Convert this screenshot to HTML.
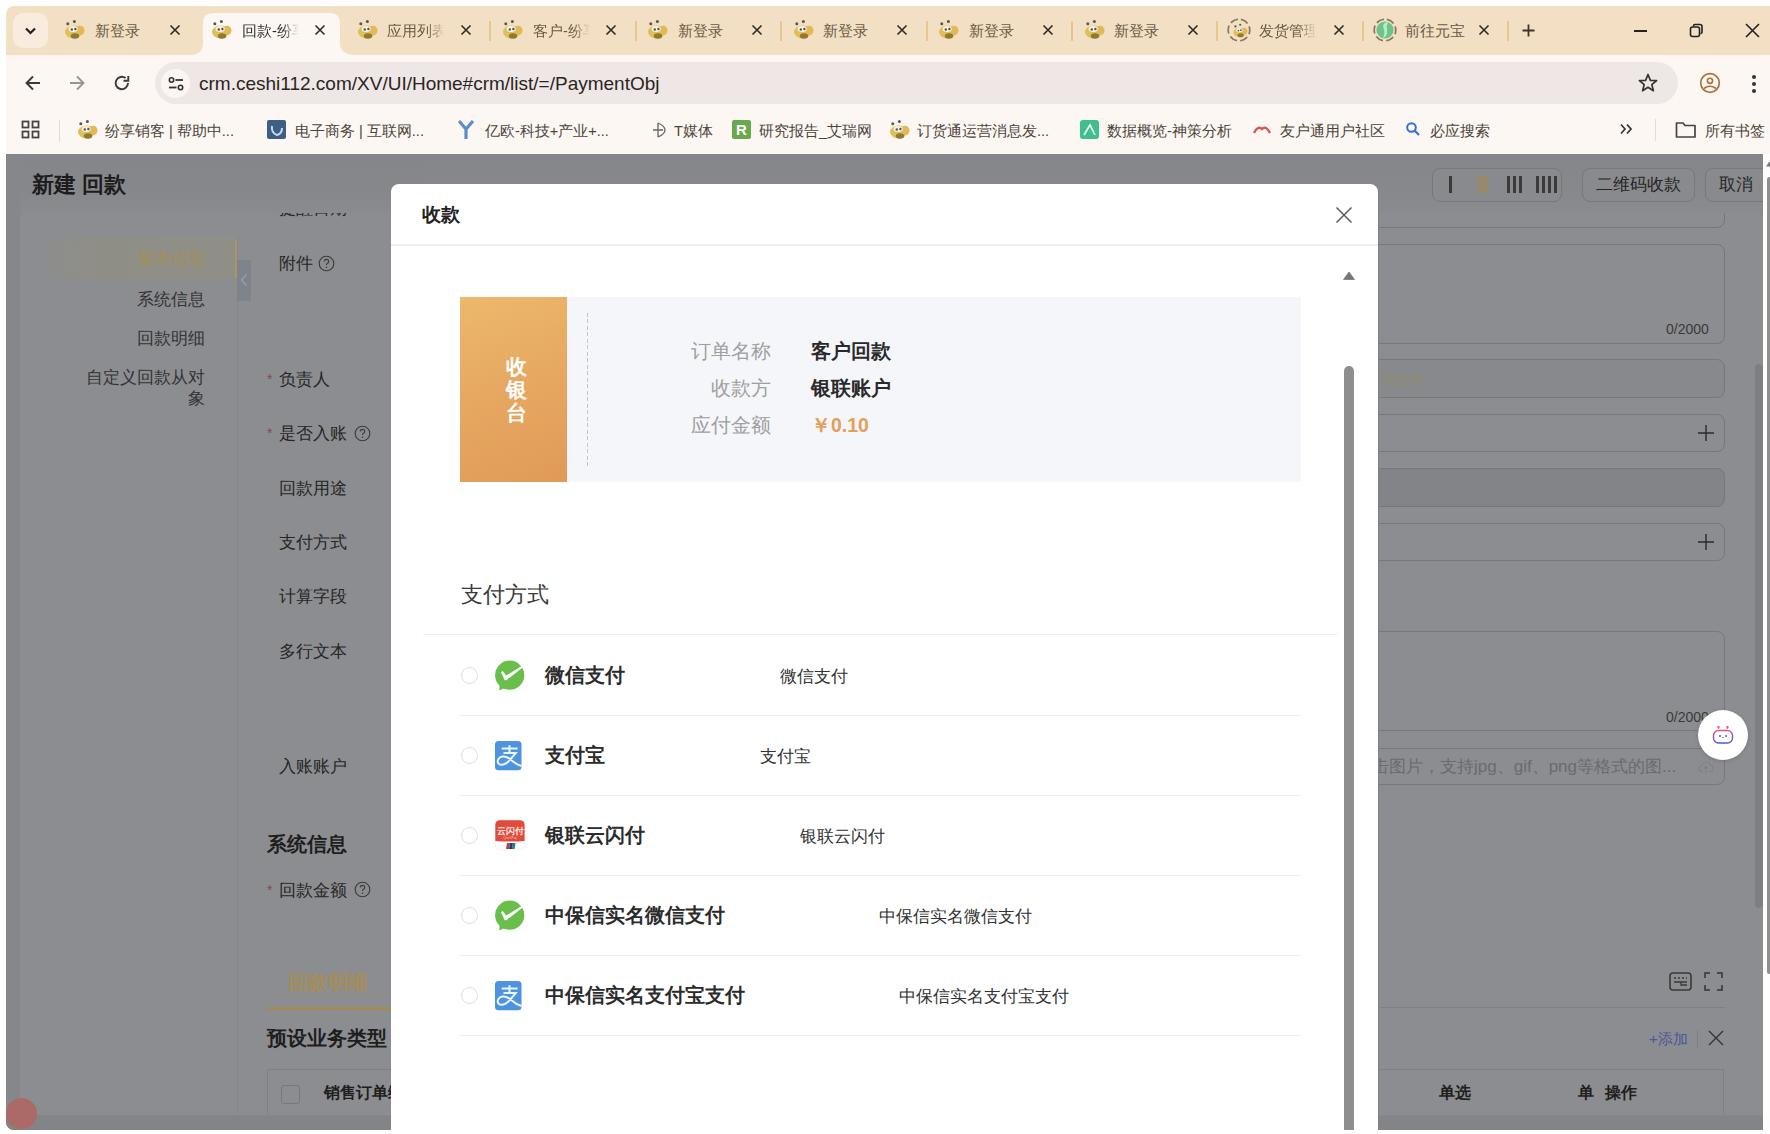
<!DOCTYPE html><html><head><meta charset="utf-8"><style>
*{margin:0;padding:0;box-sizing:border-box}
html,body{width:1770px;height:1134px;overflow:hidden;background:#fff;font-family:"Liberation Sans",sans-serif;}
.a{position:absolute;white-space:nowrap;line-height:1}
svg.a{overflow:visible}
</style></head><body>
<div class="a" style="left:6px;top:6px;width:1764px;height:1124px;border-radius:8px 0 0 8px;background:#f2dfc4;overflow:hidden">
</div>
<div class="a" style="left:6px;top:55px;width:1764px;height:100px;background:#fcf7f2"></div>
<div class="a" style="left:13px;top:13px;width:35px;height:35px;border-radius:10px;background:#f9ecdf"></div>
<svg class="a" style="left:23px;top:23px" width="15" height="15" viewBox="0 0 15 15"><path d="M3 5.5 L7.5 10 L12 5.5" fill="none" stroke="#222" stroke-width="2.2"/></svg>
<svg class="a" style="left:190px;top:13px" width="166" height="42" viewBox="0 0 166 42"><path d="M0 42 Q13 42 13 30 L13 10 Q13 0 23 0 L140 0 Q150 0 150 10 L150 30 Q150 42 166 42 Z" fill="#fcf7f2"/></svg>
<svg class="a" style="left:63.0px;top:19.0px" width="22.0" height="22.0" viewBox="0 0 22 22"><ellipse cx="10.5" cy="13" rx="8.5" ry="6.5" fill="#dfbf5a"/><ellipse cx="17" cy="11.5" rx="4.5" ry="4.8" fill="#e2b957"/><ellipse cx="12" cy="17" rx="4.2" ry="2.8" fill="#8f7a32"/><ellipse cx="10.2" cy="10" rx="4.6" ry="3" fill="#f6f2e2"/><circle cx="8.8" cy="10.5" r="1.2" fill="#555"/><circle cx="12.4" cy="10" r="1.2" fill="#555"/><circle cx="4.8" cy="4.7" r="1.5" fill="#5a5550"/><circle cx="11.4" cy="2.4" r="1.5" fill="#5a5550"/></svg>
<div class="a" style="left:95px;top:24px;font-size:14.5px;color:#6b5a45">新登录</div>
<svg class="a" style="left:169px;top:24px" width="12" height="12" viewBox="0 0 12 12"><path d="M1.5 1.5 L10.5 10.5 M10.5 1.5 L1.5 10.5" stroke="#2e2a26" stroke-width="1.6"/></svg>
<svg class="a" style="left:210.0px;top:19.0px" width="22.0" height="22.0" viewBox="0 0 22 22"><ellipse cx="10.5" cy="13" rx="8.5" ry="6.5" fill="#dfbf5a"/><ellipse cx="17" cy="11.5" rx="4.5" ry="4.8" fill="#e2b957"/><ellipse cx="12" cy="17" rx="4.2" ry="2.8" fill="#8f7a32"/><ellipse cx="10.2" cy="10" rx="4.6" ry="3" fill="#f6f2e2"/><circle cx="8.8" cy="10.5" r="1.2" fill="#555"/><circle cx="12.4" cy="10" r="1.2" fill="#555"/><circle cx="4.8" cy="4.7" r="1.5" fill="#5a5550"/><circle cx="11.4" cy="2.4" r="1.5" fill="#5a5550"/></svg>
<div class="a" style="left:242px;top:24px;font-size:14.5px;color:#2f2f2f;width:57px;overflow:hidden;-webkit-mask-image:linear-gradient(90deg,#000 72%,transparent 100%)">回款-纷享</div>
<svg class="a" style="left:314px;top:24px" width="12" height="12" viewBox="0 0 12 12"><path d="M1.5 1.5 L10.5 10.5 M10.5 1.5 L1.5 10.5" stroke="#2e2a26" stroke-width="1.6"/></svg>
<svg class="a" style="left:356.0px;top:19.0px" width="22.0" height="22.0" viewBox="0 0 22 22"><ellipse cx="10.5" cy="13" rx="8.5" ry="6.5" fill="#dfbf5a"/><ellipse cx="17" cy="11.5" rx="4.5" ry="4.8" fill="#e2b957"/><ellipse cx="12" cy="17" rx="4.2" ry="2.8" fill="#8f7a32"/><ellipse cx="10.2" cy="10" rx="4.6" ry="3" fill="#f6f2e2"/><circle cx="8.8" cy="10.5" r="1.2" fill="#555"/><circle cx="12.4" cy="10" r="1.2" fill="#555"/><circle cx="4.8" cy="4.7" r="1.5" fill="#5a5550"/><circle cx="11.4" cy="2.4" r="1.5" fill="#5a5550"/></svg>
<div class="a" style="left:387px;top:24px;font-size:14.5px;color:#6b5a45;width:57px;overflow:hidden;-webkit-mask-image:linear-gradient(90deg,#000 72%,transparent 100%)">应用列表</div>
<svg class="a" style="left:460px;top:24px" width="12" height="12" viewBox="0 0 12 12"><path d="M1.5 1.5 L10.5 10.5 M10.5 1.5 L1.5 10.5" stroke="#2e2a26" stroke-width="1.6"/></svg>
<svg class="a" style="left:501.0px;top:19.0px" width="22.0" height="22.0" viewBox="0 0 22 22"><ellipse cx="10.5" cy="13" rx="8.5" ry="6.5" fill="#dfbf5a"/><ellipse cx="17" cy="11.5" rx="4.5" ry="4.8" fill="#e2b957"/><ellipse cx="12" cy="17" rx="4.2" ry="2.8" fill="#8f7a32"/><ellipse cx="10.2" cy="10" rx="4.6" ry="3" fill="#f6f2e2"/><circle cx="8.8" cy="10.5" r="1.2" fill="#555"/><circle cx="12.4" cy="10" r="1.2" fill="#555"/><circle cx="4.8" cy="4.7" r="1.5" fill="#5a5550"/><circle cx="11.4" cy="2.4" r="1.5" fill="#5a5550"/></svg>
<div class="a" style="left:533px;top:24px;font-size:14.5px;color:#6b5a45;width:57px;overflow:hidden;-webkit-mask-image:linear-gradient(90deg,#000 72%,transparent 100%)">客户-纷享</div>
<svg class="a" style="left:605px;top:24px" width="12" height="12" viewBox="0 0 12 12"><path d="M1.5 1.5 L10.5 10.5 M10.5 1.5 L1.5 10.5" stroke="#2e2a26" stroke-width="1.6"/></svg>
<svg class="a" style="left:646.0px;top:19.0px" width="22.0" height="22.0" viewBox="0 0 22 22"><ellipse cx="10.5" cy="13" rx="8.5" ry="6.5" fill="#dfbf5a"/><ellipse cx="17" cy="11.5" rx="4.5" ry="4.8" fill="#e2b957"/><ellipse cx="12" cy="17" rx="4.2" ry="2.8" fill="#8f7a32"/><ellipse cx="10.2" cy="10" rx="4.6" ry="3" fill="#f6f2e2"/><circle cx="8.8" cy="10.5" r="1.2" fill="#555"/><circle cx="12.4" cy="10" r="1.2" fill="#555"/><circle cx="4.8" cy="4.7" r="1.5" fill="#5a5550"/><circle cx="11.4" cy="2.4" r="1.5" fill="#5a5550"/></svg>
<div class="a" style="left:678px;top:24px;font-size:14.5px;color:#6b5a45">新登录</div>
<svg class="a" style="left:751px;top:24px" width="12" height="12" viewBox="0 0 12 12"><path d="M1.5 1.5 L10.5 10.5 M10.5 1.5 L1.5 10.5" stroke="#2e2a26" stroke-width="1.6"/></svg>
<svg class="a" style="left:792.0px;top:19.0px" width="22.0" height="22.0" viewBox="0 0 22 22"><ellipse cx="10.5" cy="13" rx="8.5" ry="6.5" fill="#dfbf5a"/><ellipse cx="17" cy="11.5" rx="4.5" ry="4.8" fill="#e2b957"/><ellipse cx="12" cy="17" rx="4.2" ry="2.8" fill="#8f7a32"/><ellipse cx="10.2" cy="10" rx="4.6" ry="3" fill="#f6f2e2"/><circle cx="8.8" cy="10.5" r="1.2" fill="#555"/><circle cx="12.4" cy="10" r="1.2" fill="#555"/><circle cx="4.8" cy="4.7" r="1.5" fill="#5a5550"/><circle cx="11.4" cy="2.4" r="1.5" fill="#5a5550"/></svg>
<div class="a" style="left:823px;top:24px;font-size:14.5px;color:#6b5a45">新登录</div>
<svg class="a" style="left:896px;top:24px" width="12" height="12" viewBox="0 0 12 12"><path d="M1.5 1.5 L10.5 10.5 M10.5 1.5 L1.5 10.5" stroke="#2e2a26" stroke-width="1.6"/></svg>
<svg class="a" style="left:937.0px;top:19.0px" width="22.0" height="22.0" viewBox="0 0 22 22"><ellipse cx="10.5" cy="13" rx="8.5" ry="6.5" fill="#dfbf5a"/><ellipse cx="17" cy="11.5" rx="4.5" ry="4.8" fill="#e2b957"/><ellipse cx="12" cy="17" rx="4.2" ry="2.8" fill="#8f7a32"/><ellipse cx="10.2" cy="10" rx="4.6" ry="3" fill="#f6f2e2"/><circle cx="8.8" cy="10.5" r="1.2" fill="#555"/><circle cx="12.4" cy="10" r="1.2" fill="#555"/><circle cx="4.8" cy="4.7" r="1.5" fill="#5a5550"/><circle cx="11.4" cy="2.4" r="1.5" fill="#5a5550"/></svg>
<div class="a" style="left:969px;top:24px;font-size:14.5px;color:#6b5a45">新登录</div>
<svg class="a" style="left:1042px;top:24px" width="12" height="12" viewBox="0 0 12 12"><path d="M1.5 1.5 L10.5 10.5 M10.5 1.5 L1.5 10.5" stroke="#2e2a26" stroke-width="1.6"/></svg>
<svg class="a" style="left:1083.0px;top:19.0px" width="22.0" height="22.0" viewBox="0 0 22 22"><ellipse cx="10.5" cy="13" rx="8.5" ry="6.5" fill="#dfbf5a"/><ellipse cx="17" cy="11.5" rx="4.5" ry="4.8" fill="#e2b957"/><ellipse cx="12" cy="17" rx="4.2" ry="2.8" fill="#8f7a32"/><ellipse cx="10.2" cy="10" rx="4.6" ry="3" fill="#f6f2e2"/><circle cx="8.8" cy="10.5" r="1.2" fill="#555"/><circle cx="12.4" cy="10" r="1.2" fill="#555"/><circle cx="4.8" cy="4.7" r="1.5" fill="#5a5550"/><circle cx="11.4" cy="2.4" r="1.5" fill="#5a5550"/></svg>
<div class="a" style="left:1114px;top:24px;font-size:14.5px;color:#6b5a45">新登录</div>
<svg class="a" style="left:1187px;top:24px" width="12" height="12" viewBox="0 0 12 12"><path d="M1.5 1.5 L10.5 10.5 M10.5 1.5 L1.5 10.5" stroke="#2e2a26" stroke-width="1.6"/></svg>
<svg class="a" style="left:1231.58px;top:22.58px" width="15.84" height="15.84" viewBox="0 0 22 22"><ellipse cx="10.5" cy="13" rx="8.5" ry="6.5" fill="#dfbf5a"/><ellipse cx="17" cy="11.5" rx="4.5" ry="4.8" fill="#e2b957"/><ellipse cx="12" cy="17" rx="4.2" ry="2.8" fill="#8f7a32"/><ellipse cx="10.2" cy="10" rx="4.6" ry="3" fill="#f6f2e2"/><circle cx="8.8" cy="10.5" r="1.2" fill="#555"/><circle cx="12.4" cy="10" r="1.2" fill="#555"/><circle cx="4.8" cy="4.7" r="1.5" fill="#5a5550"/><circle cx="11.4" cy="2.4" r="1.5" fill="#5a5550"/></svg>
<svg class="a" style="left:1227px;top:18px" width="24" height="24" viewBox="0 0 24 24"><circle cx="12" cy="12" r="10.8" fill="none" stroke="#8a7560" stroke-width="1.7" stroke-dasharray="8 3.3" transform="rotate(-80 12 12)"/></svg>
<div class="a" style="left:1259px;top:24px;font-size:14.5px;color:#6b5a45;width:57px;overflow:hidden;-webkit-mask-image:linear-gradient(90deg,#000 72%,transparent 100%)">发货管理</div>
<svg class="a" style="left:1333px;top:24px" width="12" height="12" viewBox="0 0 12 12"><path d="M1.5 1.5 L10.5 10.5 M10.5 1.5 L1.5 10.5" stroke="#2e2a26" stroke-width="1.6"/></svg>
<svg class="a" style="left:1373px;top:18px" width="24" height="24" viewBox="0 0 24 24"><circle cx="12" cy="12" r="10.8" fill="none" stroke="#8a7560" stroke-width="1.7" stroke-dasharray="8 3.3" transform="rotate(-80 12 12)"/><circle cx="12" cy="12" r="8.6" fill="#6cc48a"/><path d="M13.5 4 Q9 6 10.5 10 Q12.5 14 10 20 Q15 18 14 12 Q13 8 15 4.5 Z" fill="#b8ecc8"/></svg>
<div class="a" style="left:1405px;top:24px;font-size:14.5px;color:#6b5a45">前往元宝</div>
<svg class="a" style="left:1478px;top:24px" width="12" height="12" viewBox="0 0 12 12"><path d="M1.5 1.5 L10.5 10.5 M10.5 1.5 L1.5 10.5" stroke="#2e2a26" stroke-width="1.6"/></svg>
<div class="a" style="left:489px;top:21px;width:2px;height:20px;background:#e9c58f"></div>
<div class="a" style="left:635px;top:21px;width:2px;height:20px;background:#e9c58f"></div>
<div class="a" style="left:780px;top:21px;width:2px;height:20px;background:#e9c58f"></div>
<div class="a" style="left:926px;top:21px;width:2px;height:20px;background:#e9c58f"></div>
<div class="a" style="left:1071px;top:21px;width:2px;height:20px;background:#e9c58f"></div>
<div class="a" style="left:1216px;top:21px;width:2px;height:20px;background:#e9c58f"></div>
<div class="a" style="left:1362px;top:21px;width:2px;height:20px;background:#e9c58f"></div>
<div class="a" style="left:1507px;top:21px;width:2px;height:20px;background:#e9c58f"></div>
<svg class="a" style="left:1521px;top:23px" width="15" height="15" viewBox="0 0 15 15"><path d="M7.5 1.5 V13.5 M1.5 7.5 H13.5" stroke="#3e362c" stroke-width="1.8"/></svg>
<div class="a" style="left:1634px;top:30px;width:13px;height:1.5px;background:#222"></div>
<svg class="a" style="left:1689px;top:23px" width="15" height="15" viewBox="0 0 15 15"><rect x="1.5" y="4" width="9" height="9.5" rx="2" fill="none" stroke="#222" stroke-width="1.6"/><path d="M4.5 3.5 V3 Q4.5 1.5 6 1.5 H11 Q13 1.5 13 3.5 V9 Q13 10.5 11.5 10.5" fill="none" stroke="#222" stroke-width="1.6"/></svg>
<svg class="a" style="left:1745px;top:23px" width="15" height="15" viewBox="0 0 15 15"><path d="M1 1 L14 14 M14 1 L1 14" stroke="#222" stroke-width="1.6"/></svg>
<svg class="a" style="left:23px;top:73px" width="20" height="20" viewBox="0 0 20 20"><path d="M17 10 H3.5 M10 3.5 L3.5 10 L10 16.5" fill="none" stroke="#3a3a3a" stroke-width="1.9"/></svg>
<svg class="a" style="left:67px;top:73px" width="20" height="20" viewBox="0 0 20 20"><path d="M3 10 H16.5 M10 3.5 L16.5 10 L10 16.5" fill="none" stroke="#9a948e" stroke-width="1.9"/></svg>
<svg class="a" style="left:112px;top:73px" width="20" height="20" viewBox="0 0 20 20"><path d="M16 10 A6.2 6.2 0 1 1 13.6 5.1" fill="none" stroke="#3a3a3a" stroke-width="1.9"/><path d="M16.3 3 V7.8 H11.5" fill="none" stroke="#3a3a3a" stroke-width="1.9"/></svg>
<div class="a" style="left:155px;top:62px;width:1523px;height:42px;border-radius:21px;background:#eee7e5"></div>
<div class="a" style="left:161px;top:69px;width:29px;height:29px;border-radius:15px;background:#fbf6f2"></div>
<svg class="a" style="left:166px;top:74px" width="20" height="20" viewBox="0 0 20 20"><circle cx="5.5" cy="6" r="2.2" fill="none" stroke="#333" stroke-width="1.6"/><path d="M9.5 6 H17" stroke="#333" stroke-width="1.8"/><circle cx="14.5" cy="13.5" r="2.2" fill="none" stroke="#333" stroke-width="1.6"/><path d="M3 13.5 H10.5" stroke="#333" stroke-width="1.8"/></svg>
<div class="a" style="left:199px;top:74px;font-size:19px;color:#2a2522;font-weight:normal;">crm.ceshi112.com/XV/UI/Home#crm/list/=/PaymentObj</div>
<svg class="a" style="left:1637px;top:72px" width="22" height="22" viewBox="0 0 22 22"><path d="M11 2.5 L13.4 8.3 L19.6 8.6 L14.8 12.6 L16.4 18.7 L11 15.3 L5.6 18.7 L7.2 12.6 L2.4 8.6 L8.6 8.3 Z" fill="none" stroke="#333" stroke-width="1.7" stroke-linejoin="round"/></svg>
<svg class="a" style="left:1699px;top:72px" width="22" height="22" viewBox="0 0 22 22"><circle cx="11" cy="11" r="9.3" fill="none" stroke="#a7743a" stroke-width="1.7"/><circle cx="11" cy="8.8" r="2.6" fill="none" stroke="#a7743a" stroke-width="1.6"/><path d="M5 16.5 Q11 12 17 16.5" fill="none" stroke="#a7743a" stroke-width="1.6"/></svg>
<div class="a" style="left:1752px;top:74.5px;width:4px;height:4px;border-radius:2px;background:#333"></div>
<div class="a" style="left:1752px;top:81.5px;width:4px;height:4px;border-radius:2px;background:#333"></div>
<div class="a" style="left:1752px;top:88.5px;width:4px;height:4px;border-radius:2px;background:#333"></div>
<svg class="a" style="left:21px;top:120px" width="19" height="19" viewBox="0 0 19 19"><rect x="1.5" y="1.5" width="6" height="6" fill="none" stroke="#444" stroke-width="1.8"/><rect x="11.5" y="1.5" width="6" height="6" fill="none" stroke="#444" stroke-width="1.8"/><rect x="1.5" y="11.5" width="6" height="6" fill="none" stroke="#444" stroke-width="1.8"/><rect x="11.5" y="11.5" width="6" height="6" fill="none" stroke="#444" stroke-width="1.8"/></svg>
<div class="a" style="left:59px;top:120px;width:1px;height:22px;background:#eadbc8"></div>
<svg class="a" style="left:76.0px;top:119.0px" width="22.0" height="22.0" viewBox="0 0 22 22"><ellipse cx="10.5" cy="13" rx="8.5" ry="6.5" fill="#dfbf5a"/><ellipse cx="17" cy="11.5" rx="4.5" ry="4.8" fill="#e2b957"/><ellipse cx="12" cy="17" rx="4.2" ry="2.8" fill="#8f7a32"/><ellipse cx="10.2" cy="10" rx="4.6" ry="3" fill="#f6f2e2"/><circle cx="8.8" cy="10.5" r="1.2" fill="#555"/><circle cx="12.4" cy="10" r="1.2" fill="#555"/><circle cx="4.8" cy="4.7" r="1.5" fill="#5a5550"/><circle cx="11.4" cy="2.4" r="1.5" fill="#5a5550"/></svg>
<div class="a" style="left:105px;top:123.5px;font-size:14.5px;color:#4d443c;font-weight:normal;">纷享销客 | 帮助中...</div>
<div class="a" style="left:267px;top:120px;width:19px;height:19px;background:#3d5f85;border-radius:2px"></div><svg class="a" style="left:267px;top:120px" width="19" height="19"><path d="M5 6 Q4 13 10 15 Q15 14 15 8" fill="none" stroke="#c8d8e8" stroke-width="2"/></svg>
<div class="a" style="left:295px;top:123.5px;font-size:14.5px;color:#4d443c;font-weight:normal;">电子商务 | 互联网...</div>
<svg class="a" style="left:456px;top:119px" width="20" height="22" viewBox="0 0 20 22"><path d="M3 2 L10 10 L17 2 M10 10 V20" fill="none" stroke="#5b8dc9" stroke-width="3.2"/></svg>
<div class="a" style="left:485px;top:123.5px;font-size:14.5px;color:#4d443c;font-weight:normal;">亿欧-科技+产业+...</div>
<svg class="a" style="left:650px;top:121px" width="16" height="18" viewBox="0 0 16 18"><path d="M3 9 H13 M8 2 V16 M8 2 Q15 5 15 9 Q15 13 8 16" fill="none" stroke="#666" stroke-width="1.3"/></svg>
<div class="a" style="left:674px;top:123.5px;font-size:14.5px;color:#4d443c;font-weight:normal;">T媒体</div>
<div class="a" style="left:732px;top:120px;width:19px;height:19px;background:#6aa84f;border-radius:2px"></div><div class="a" style="left:736px;top:122px;font-size:15px;font-weight:bold;color:#fff">R</div>
<div class="a" style="left:759px;top:123.5px;font-size:14.5px;color:#4d443c;font-weight:normal;">研究报告_艾瑞网</div>
<svg class="a" style="left:888.0px;top:119.0px" width="22.0" height="22.0" viewBox="0 0 22 22"><ellipse cx="10.5" cy="13" rx="8.5" ry="6.5" fill="#dfbf5a"/><ellipse cx="17" cy="11.5" rx="4.5" ry="4.8" fill="#e2b957"/><ellipse cx="12" cy="17" rx="4.2" ry="2.8" fill="#8f7a32"/><ellipse cx="10.2" cy="10" rx="4.6" ry="3" fill="#f6f2e2"/><circle cx="8.8" cy="10.5" r="1.2" fill="#555"/><circle cx="12.4" cy="10" r="1.2" fill="#555"/><circle cx="4.8" cy="4.7" r="1.5" fill="#5a5550"/><circle cx="11.4" cy="2.4" r="1.5" fill="#5a5550"/></svg>
<div class="a" style="left:917px;top:123.5px;font-size:14.5px;color:#4d443c;font-weight:normal;">订货通运营消息发...</div>
<div class="a" style="left:1080px;top:120px;width:19px;height:19px;background:#3fbf8a;border-radius:3px"></div><svg class="a" style="left:1080px;top:120px" width="19" height="19"><path d="M4 15 L10 5 L15 15" fill="none" stroke="#fff" stroke-width="1.6"/></svg>
<div class="a" style="left:1107px;top:123.5px;font-size:14.5px;color:#4d443c;font-weight:normal;">数据概览-神策分析</div>
<svg class="a" style="left:1252px;top:123px" width="20" height="12" viewBox="0 0 20 12"><path d="M2 10 Q6 2 10 6 Q14 2 18 10" fill="none" stroke="#d9534f" stroke-width="2.4"/></svg>
<div class="a" style="left:1280px;top:123.5px;font-size:14.5px;color:#4d443c;font-weight:normal;">友户通用户社区</div>
<svg class="a" style="left:1405px;top:121px" width="16" height="16" viewBox="0 0 16 16"><circle cx="6.5" cy="6.5" r="4.3" fill="none" stroke="#2f6fd6" stroke-width="2"/><path d="M9.8 9.8 L14 14" stroke="#2f6fd6" stroke-width="2.2"/></svg>
<div class="a" style="left:1430px;top:123.5px;font-size:14.5px;color:#4d443c;font-weight:normal;">必应搜索</div>
<svg class="a" style="left:1619px;top:123px" width="14" height="12" viewBox="0 0 14 12"><path d="M2 1.5 L6 6 L2 10.5 M8 1.5 L12 6 L8 10.5" fill="none" stroke="#333" stroke-width="1.7"/></svg>
<div class="a" style="left:1655px;top:119px;width:1px;height:22px;background:#eadbc8"></div>
<svg class="a" style="left:1675px;top:121px" width="22" height="18" viewBox="0 0 22 18"><path d="M1.5 2 H8 L10 4.5 H20 V16 H1.5 Z" fill="none" stroke="#444" stroke-width="1.7" stroke-linejoin="round"/></svg>
<div class="a" style="left:1705px;top:123.5px;font-size:14.5px;color:#4d443c;font-weight:normal;">所有书签</div>
<div class="a" style="left:6px;top:154px;width:1757px;height:976px;background:#f5f6f9;overflow:hidden;border-radius:0 0 0 8px">
<div class="a" style="left:0px;top:0px;width:1757px;height:976px;background:#86878b"></div>
<div class="a" style="left:14px;top:58px;width:1743px;height:903px;background:#8c8d91;border-radius:8px 8px 0 0"></div>
<div class="a" style="left:231px;top:84px;width:1px;height:877px;background:#85868a"></div>
<div class="a" style="left:40px;top:84px;width:191px;height:41px;background:linear-gradient(90deg,rgba(143,142,134,0.3) 0%,#8f8e86 25%,#908f87 100%);border-radius:10px 0 0 10px;filter:blur(1.5px)"></div>
<div class="a" style="left:229px;top:86px;width:2px;height:38px;background:#a99464"></div>
<div class="a" style="left:199px;top:96px;font-size:17px;color:#a38f55;font-weight:normal;transform:translateX(-100%)">基本信息</div>
<div class="a" style="left:199px;top:137px;font-size:17px;color:#333;font-weight:normal;transform:translateX(-100%)">系统信息</div>
<div class="a" style="left:199px;top:176px;font-size:17px;color:#333;font-weight:normal;transform:translateX(-100%)">回款明细</div>
<div class="a" style="left:199px;top:215px;font-size:17px;color:#333;font-weight:normal;transform:translateX(-100%)">自定义回款从对</div>
<div class="a" style="left:199px;top:236px;font-size:17px;color:#333;font-weight:normal;transform:translateX(-100%)">象</div>
<div class="a" style="left:231px;top:106px;width:14px;height:41px;background:#7f848c"></div>
<svg class="a" style="left:234px;top:119px" width="8" height="14" viewBox="0 0 8 14"><path d="M6.5 1.5 L1.5 7 L6.5 12.5" fill="none" stroke="#9aa0a8" stroke-width="1.3"/></svg>
<div class="a" style="left:273px;top:46px;font-size:17px;color:#262626;font-weight:normal;">提醒日期</div>
<div class="a" style="left:273px;top:101px;font-size:17px;color:#262626;font-weight:normal;">附件</div>
<svg class="a" style="left:312px;top:101px" width="17" height="17" viewBox="0 0 17 17"><circle cx="8.5" cy="8.5" r="7.3" fill="none" stroke="#3c3c3c" stroke-width="1.1"/><path d="M6.3 6.6 Q6.3 4.4 8.5 4.4 Q10.7 4.4 10.7 6.4 Q10.7 7.6 9.4 8.3 Q8.5 8.8 8.5 10" fill="none" stroke="#3c3c3c" stroke-width="1.2"/><circle cx="8.5" cy="12.3" r="0.8" fill="#3c3c3c"/></svg>
<div class="a" style="left:261px;top:218px;font-size:14px;color:#8a4650;font-weight:normal;">*</div>
<div class="a" style="left:273px;top:217px;font-size:17px;color:#262626;font-weight:normal;">负责人</div>
<div class="a" style="left:261px;top:272px;font-size:14px;color:#8a4650;font-weight:normal;">*</div>
<div class="a" style="left:273px;top:271px;font-size:17px;color:#262626;font-weight:normal;">是否入账</div>
<svg class="a" style="left:348px;top:271px" width="17" height="17" viewBox="0 0 17 17"><circle cx="8.5" cy="8.5" r="7.3" fill="none" stroke="#3c3c3c" stroke-width="1.1"/><path d="M6.3 6.6 Q6.3 4.4 8.5 4.4 Q10.7 4.4 10.7 6.4 Q10.7 7.6 9.4 8.3 Q8.5 8.8 8.5 10" fill="none" stroke="#3c3c3c" stroke-width="1.2"/><circle cx="8.5" cy="12.3" r="0.8" fill="#3c3c3c"/></svg>
<div class="a" style="left:273px;top:326px;font-size:17px;color:#262626;font-weight:normal;">回款用途</div>
<div class="a" style="left:273px;top:380px;font-size:17px;color:#262626;font-weight:normal;">支付方式</div>
<div class="a" style="left:273px;top:434px;font-size:17px;color:#262626;font-weight:normal;">计算字段</div>
<div class="a" style="left:273px;top:489px;font-size:17px;color:#262626;font-weight:normal;">多行文本</div>
<div class="a" style="left:273px;top:604px;font-size:17px;color:#262626;font-weight:normal;">入账账户</div>
<div class="a" style="left:261px;top:681px;font-size:19.5px;color:#1e1e1e;font-weight:bold;">系统信息</div>
<div class="a" style="left:261px;top:729px;font-size:14px;color:#8a4650;font-weight:normal;">*</div>
<div class="a" style="left:273px;top:728px;font-size:17px;color:#262626;font-weight:normal;">回款金额</div>
<svg class="a" style="left:348px;top:727px" width="17" height="17" viewBox="0 0 17 17"><circle cx="8.5" cy="8.5" r="7.3" fill="none" stroke="#3c3c3c" stroke-width="1.1"/><path d="M6.3 6.6 Q6.3 4.4 8.5 4.4 Q10.7 4.4 10.7 6.4 Q10.7 7.6 9.4 8.3 Q8.5 8.8 8.5 10" fill="none" stroke="#3c3c3c" stroke-width="1.2"/><circle cx="8.5" cy="12.3" r="0.8" fill="#3c3c3c"/></svg>
<div class="a" style="left:282px;top:819px;font-size:19.5px;color:#a58e55;font-weight:bold;">回款明细</div>
<div class="a" style="left:261px;top:853px;width:130px;height:3px;background:#a18a55"></div>
<div class="a" style="left:261px;top:875px;font-size:19.5px;color:#1e1e1e;font-weight:bold;">预设业务类型</div>
<div class="a" style="left:261px;top:915px;width:1457px;height:46px;border:1px solid #7f8084;border-bottom:none;background:#8c8d91"></div>
<div class="a" style="left:275px;top:931px;width:19px;height:19px;border:1px solid #77787c;border-radius:3px"></div>
<div class="a" style="left:318px;top:931px;font-size:16px;color:#1e1e1e;font-weight:bold;">销售订单编号</div>
<div class="a" style="left:1433px;top:931px;font-size:16px;color:#1e1e1e;font-weight:bold;">单选</div>
<div class="a" style="left:1572px;top:931px;font-size:16px;color:#1e1e1e;font-weight:bold;">单</div>
<div class="a" style="left:1599px;top:931px;font-size:16px;color:#1e1e1e;font-weight:bold;">操作</div>
<div class="a" style="left:0px;top:962px;width:1757px;height:14px;background:#828487"></div>
<div class="a" style="left:1354px;top:36px;width:365px;height:38px;border:1px solid #77787c;border-radius:8px"></div>
<div class="a" style="left:1354px;top:90px;width:365px;height:100px;border:1px solid #77787c;border-radius:8px;background:#8c8d91"></div>
<div class="a" style="left:1660px;top:168px;font-size:14px;color:#3a3a3a;font-weight:normal;">0/2000</div>
<div class="a" style="left:1354px;top:205px;width:365px;height:39px;border:1px solid #77787c;border-radius:8px;background:#88898d"></div>
<div class="a" style="left:1376px;top:218px;font-size:14px;color:#8f8b70;font-weight:normal;">请选择</div>
<div class="a" style="left:1354px;top:260px;width:365px;height:38px;border:1px solid #77787c;border-radius:8px;background:#8c8d91"></div>
<svg class="a" style="left:1691px;top:270.0px" width="18" height="18" viewBox="0 0 18 18"><path d="M9 1 V17 M1 9 H17" stroke="#2a2a2a" stroke-width="1.4"/></svg>
<div class="a" style="left:1354px;top:314px;width:365px;height:39px;border:1px solid #77787c;border-radius:8px;background:#838488"></div>
<div class="a" style="left:1354px;top:369px;width:365px;height:38px;border:1px solid #77787c;border-radius:8px;background:#8c8d91"></div>
<svg class="a" style="left:1691px;top:379.0px" width="18" height="18" viewBox="0 0 18 18"><path d="M9 1 V17 M1 9 H17" stroke="#2a2a2a" stroke-width="1.4"/></svg>
<div class="a" style="left:1354px;top:477px;width:365px;height:100px;border:1px solid #77787c;border-radius:8px;background:#8c8d91"></div>
<div class="a" style="left:1660px;top:556px;font-size:14px;color:#3a3a3a;font-weight:normal;">0/2000</div>
<div class="a" style="left:1354px;top:594px;width:365px;height:37px;border:1px solid #77787c;border-radius:8px;background:#8c8d91"></div>
<div class="a" style="left:1366px;top:604px;font-size:17px;color:#6a6b6e;font-weight:normal;">击图片，支持jpg、gif、png等格式的图...</div>
<svg class="a" style="left:1692px;top:606px" width="16" height="15" viewBox="0 0 16 15"><path d="M5 11.5 H4 Q1 11.5 1 8.5 Q1 6 3.5 5.8 Q4.2 2 8 2 Q11.8 2 12.5 5.8 Q15 6 15 8.5 Q15 11.5 12 11.5 H11 M8 6.5 V14 M6 8.5 L8 6.5 L10 8.5" fill="none" stroke="#7f8084" stroke-width="1.1"/></svg>
<div class="a" style="left:14px;top:0px;width:400px;height:59px;background:linear-gradient(180deg,#85868a 0%,#86878b 55%,#8a8b8f 100%)"></div>
<div class="a" style="left:414px;top:0px;width:1343px;height:59px;background:linear-gradient(180deg,#85868a 0%,#87888c 60%,#8a8b8f 100%)"></div>
<div class="a" style="left:25.5px;top:19.5px;font-size:22px;color:#1c1c1c;font-weight:bold;">新建 回款</div>
<div class="a" style="left:1426px;top:14px;width:130px;height:34px;border:1px solid #77787c;border-radius:8px;background:#898a8e"></div>
<div class="a" style="left:1443px;top:22px;width:2.5px;height:17px;background:#3a3a3a"></div>
<div class="a" style="left:1472px;top:22px;width:2.5px;height:17px;background:#a08a50"></div>
<div class="a" style="left:1478px;top:22px;width:2.5px;height:17px;background:#a08a50"></div>
<div class="a" style="left:1501px;top:22px;width:2.5px;height:17px;background:#3a3a3a"></div>
<div class="a" style="left:1507px;top:22px;width:2.5px;height:17px;background:#3a3a3a"></div>
<div class="a" style="left:1513px;top:22px;width:2.5px;height:17px;background:#3a3a3a"></div>
<div class="a" style="left:1530px;top:22px;width:2.5px;height:17px;background:#3a3a3a"></div>
<div class="a" style="left:1536px;top:22px;width:2.5px;height:17px;background:#3a3a3a"></div>
<div class="a" style="left:1542px;top:22px;width:2.5px;height:17px;background:#3a3a3a"></div>
<div class="a" style="left:1548px;top:22px;width:2.5px;height:17px;background:#3a3a3a"></div>
<div class="a" style="left:1576px;top:14px;width:113px;height:34px;border:1px solid #77787c;border-radius:8px;background:#898a8e"></div>
<div class="a" style="left:1590px;top:22px;font-size:17px;color:#262626;font-weight:normal;">二维码收款</div>
<div class="a" style="left:1699px;top:14px;width:70px;height:34px;border:1px solid #77787c;border-radius:8px;background:#898a8e"></div>
<div class="a" style="left:1713px;top:22px;font-size:17px;color:#262626;font-weight:normal;">取消</div>
<svg class="a" style="left:1663px;top:818px" width="23" height="19" viewBox="0 0 23 19"><rect x="1" y="1" width="21" height="17" rx="3" fill="none" stroke="#3a3a3a" stroke-width="1.6"/><path d="M5 6 H7 M9 6 H11 M13 6 H15 M17 6 H18 M5 10 H18 M12 10 V13 H18" stroke="#3a3a3a" stroke-width="1.3" fill="none"/></svg>
<svg class="a" style="left:1698px;top:818px" width="19" height="19" viewBox="0 0 19 19"><path d="M1 6 V1 H6 M13 1 H18 V6 M18 13 V18 H13 M6 18 H1 V13" fill="none" stroke="#333" stroke-width="1.5"/></svg>
<div class="a" style="left:1374px;top:853px;width:345px;height:1px;background:#7f8084"></div>
<div class="a" style="left:1643px;top:877px;font-size:15px;color:#4b579a;font-weight:normal;">+添加</div>
<div class="a" style="left:1691px;top:876px;width:1px;height:18px;background:#7f8084"></div>
<svg class="a" style="left:1702px;top:876px" width="16" height="16" viewBox="0 0 16 16"><path d="M1 1 L15 15 M15 1 L1 15" stroke="#333" stroke-width="1.4"/></svg>
<div class="a" style="left:1749px;top:210px;width:8px;height:544px;background:#7d7e82;border-radius:4px"></div>
<div class="a" style="left:1692px;top:556px;width:50px;height:50px;background:#fff;border-radius:25px;box-shadow:0 1px 4px rgba(0,0,0,0.15)"></div>
<svg class="a" style="left:1705px;top:569px" width="24" height="24" viewBox="0 0 24 24"><defs><linearGradient id="bg1" x1="0" y1="0" x2="0" y2="1"><stop offset="0" stop-color="#e0508a"/><stop offset="1" stop-color="#4a5ad0"/></linearGradient></defs><rect x="2.5" y="7.5" width="19" height="12.5" rx="5" fill="none" stroke="url(#bg1)" stroke-width="1.4"/><circle cx="7.5" cy="4" r="1.2" fill="#e06080"/><circle cx="16.5" cy="4" r="1.2" fill="#e06080"/><path d="M8 6 L7.5 4.5 M16 6 L16.5 4.5" stroke="#e06080" stroke-width="1"/><circle cx="9" cy="13" r="1" fill="#4a5bd0"/><circle cx="15" cy="13" r="1" fill="#4a5bd0"/><path d="M11.3 15 L12 14 L12.7 15" stroke="#4a5bd0" stroke-width="0.8" fill="none"/></svg>
<div class="a" style="left:0px;top:944px;width:31px;height:31px;background:#ab6a67;border-radius:16px"></div>
</div>
<div class="a" style="left:1763px;top:154px;width:7px;height:976px;background:#fdfdfd"></div>
<div class="a" style="left:1766.5px;top:177px;width:5px;height:797px;background:#8f8f8f;border-radius:3px"></div>
<svg class="a" style="left:1766px;top:161px" width="6" height="6" viewBox="0 0 6 6"><path d="M0 5.5 L3.5 0.5 L7 5.5 Z" fill="#777"/></svg>
<div class="a" style="left:1378px;top:190px;width:1px;height:939px;background:#808185"></div>
<div class="a" style="left:391px;top:184px;width:987px;height:946px;background:#fff;border-radius:8px 8px 0 0;overflow:hidden">
<div class="a" style="left:30.5px;top:22px;font-size:18.6px;color:#222;font-weight:bold;">收款</div>
<svg class="a" style="left:945px;top:23px" width="16" height="16" viewBox="0 0 16 16"><path d="M0.5 0.5 L15.5 15.5 M15.5 0.5 L0.5 15.5" stroke="#5a5a5a" stroke-width="1.5"/></svg>
<div class="a" style="left:0px;top:60px;width:987px;height:2px;background:#eceef2"></div>
<svg class="a" style="left:952px;top:86px" width="12" height="10" viewBox="0 0 12 10"><path d="M0.5 9.5 L6 2 L11.5 9.5 Z" fill="#777" stroke="#777" stroke-width="0.8" stroke-linejoin="round"/></svg>
<div class="a" style="left:953px;top:182px;width:10px;height:800px;background:#8e8e8e;border-radius:5px"></div>
<div class="a" style="left:175px;top:113px;width:735px;height:185px;background:#f5f6fa"></div>
<div class="a" style="left:69px;top:113px;width:107px;height:185px;background:linear-gradient(160deg,#ecb86c 0%,#e6a660 55%,#e09a58 100%)"></div>
<div class="a" style="left:115px;top:172px;font-size:21px;color:#fff;font-weight:bold;">收</div>
<div class="a" style="left:115px;top:195px;font-size:21px;color:#fff;font-weight:bold;">银</div>
<div class="a" style="left:115px;top:218px;font-size:21px;color:#fff;font-weight:bold;">台</div>
<div class="a" style="left:195.5px;top:129px;width:1.3px;height:154px;background:repeating-linear-gradient(180deg,#c4c4c9 0 4px,transparent 4px 6.5px)"></div>
<div class="a" style="left:380px;top:158px;font-size:19.5px;color:#9f9f9f;font-weight:normal;transform:translateX(-100%)">订单名称</div>
<div class="a" style="left:420px;top:158px;font-size:19.5px;color:#2a2a2a;font-weight:bold;">客户回款</div>
<div class="a" style="left:380px;top:195px;font-size:19.5px;color:#9f9f9f;font-weight:normal;transform:translateX(-100%)">收款方</div>
<div class="a" style="left:420px;top:195px;font-size:19.5px;color:#2a2a2a;font-weight:bold;">银联账户</div>
<div class="a" style="left:380px;top:232px;font-size:19.5px;color:#9f9f9f;font-weight:normal;transform:translateX(-100%)">应付金额</div>
<div class="a" style="left:420px;top:232px;font-size:19.5px;color:#e59f58;font-weight:bold;">￥0.10</div>
<div class="a" style="left:70px;top:399.70000000000005px;font-size:22px;color:#3a3a3a;font-weight:normal;">支付方式</div>
<div class="a" style="left:32px;top:450px;width:915px;height:1px;background:#eeeff2"></div>
<div class="a" style="left:69.5px;top:482.5px;width:17px;height:17px;border:1px solid #dedede;border-radius:9px"></div>
<svg class="a" style="left:103px;top:476px" width="32" height="32" viewBox="0 0 32 32"><circle cx="15.7" cy="15.2" r="14.6" fill="#6abf4b"/><path d="M6 22 L5.2 30.5 L13 27" fill="#6abf4b"/><path d="M7 12.3 L8.8 11 L12 15.6 L28 5.8 L29 7.2 L12.3 20.2 L10.8 20.2 Z" fill="#fff"/></svg>
<div class="a" style="left:154px;top:482px;font-size:19.5px;color:#2b2b2b;font-weight:bold;">微信支付</div>
<div class="a" style="left:389px;top:483.5px;font-size:17px;color:#333;font-weight:normal;">微信支付</div>
<div class="a" style="left:69px;top:531px;width:841px;height:1px;background:#eeeff2"></div>
<div class="a" style="left:69.5px;top:562.5px;width:17px;height:17px;border:1px solid #dedede;border-radius:9px"></div>
<svg class="a" style="left:104.30000000000001px;top:556.5px" width="27" height="30" viewBox="0 0 27 30"><rect x="0" y="0" width="26.5" height="29.3" rx="3.5" fill="#4f92dd"/><path d="M6.7 7.6 H22.6 M14.5 4.2 V12.4 M8.5 12 H20.8 L14.2 19.8 Q9.5 24.5 5 23.6 Q2.3 22.8 2.8 19.6 Q4 15.3 9 15.4 Q13.5 16 17.5 20 Q21 23.3 26.5 25" fill="none" stroke="#e6f8ff" stroke-width="2"/></svg>
<div class="a" style="left:154px;top:562px;font-size:19.5px;color:#2b2b2b;font-weight:bold;">支付宝</div>
<div class="a" style="left:369px;top:563.5px;font-size:17px;color:#333;font-weight:normal;">支付宝</div>
<div class="a" style="left:69px;top:611px;width:841px;height:1px;background:#eeeff2"></div>
<div class="a" style="left:69.5px;top:642.5px;width:17px;height:17px;border:1px solid #dedede;border-radius:9px"></div>
<svg class="a" style="left:104px;top:636px" width="30" height="31" viewBox="0 0 30 31"><rect x="0.5" y="0.5" width="29" height="29.5" rx="5" fill="#fdfdfd" stroke="#f0f0f0" stroke-width="0.8"/><path d="M0.3 5 Q0.3 0.3 5 0.3 H25 Q29.6 0.3 29.6 5 V21 Q15 22 0.3 21 Z" fill="#e24a3b"/><text x="15" y="13.6" font-size="8.6" fill="#fbeaea" text-anchor="middle" font-weight="bold" font-family="Liberation Sans, sans-serif">云闪付</text><text x="15" y="18.6" font-size="3.2" fill="#f7c8c0" text-anchor="middle" font-family="Liberation Sans, sans-serif">QuickPay</text><path d="M12 23 H15 L14 29 H11 Z" fill="#c0394a"/><path d="M15 23 H18 L17 29 H14 Z" fill="#1d3f7a"/><path d="M18 23 H20.5 L19.5 29 H17 Z" fill="#2a7a6a"/></svg>
<div class="a" style="left:154px;top:642px;font-size:19.5px;color:#2b2b2b;font-weight:bold;">银联云闪付</div>
<div class="a" style="left:409px;top:643.5px;font-size:17px;color:#333;font-weight:normal;">银联云闪付</div>
<div class="a" style="left:69px;top:691px;width:841px;height:1px;background:#eeeff2"></div>
<div class="a" style="left:69.5px;top:722.5px;width:17px;height:17px;border:1px solid #dedede;border-radius:9px"></div>
<svg class="a" style="left:103px;top:716px" width="32" height="32" viewBox="0 0 32 32"><circle cx="15.7" cy="15.2" r="14.6" fill="#6abf4b"/><path d="M6 22 L5.2 30.5 L13 27" fill="#6abf4b"/><path d="M7 12.3 L8.8 11 L12 15.6 L28 5.8 L29 7.2 L12.3 20.2 L10.8 20.2 Z" fill="#fff"/></svg>
<div class="a" style="left:154px;top:722px;font-size:19.5px;color:#2b2b2b;font-weight:bold;">中保信实名微信支付</div>
<div class="a" style="left:488px;top:723.5px;font-size:17px;color:#333;font-weight:normal;">中保信实名微信支付</div>
<div class="a" style="left:69px;top:771px;width:841px;height:1px;background:#eeeff2"></div>
<div class="a" style="left:69.5px;top:802.5px;width:17px;height:17px;border:1px solid #dedede;border-radius:9px"></div>
<svg class="a" style="left:104.30000000000001px;top:796.5px" width="27" height="30" viewBox="0 0 27 30"><rect x="0" y="0" width="26.5" height="29.3" rx="3.5" fill="#4f92dd"/><path d="M6.7 7.6 H22.6 M14.5 4.2 V12.4 M8.5 12 H20.8 L14.2 19.8 Q9.5 24.5 5 23.6 Q2.3 22.8 2.8 19.6 Q4 15.3 9 15.4 Q13.5 16 17.5 20 Q21 23.3 26.5 25" fill="none" stroke="#e6f8ff" stroke-width="2"/></svg>
<div class="a" style="left:154px;top:802px;font-size:19.5px;color:#2b2b2b;font-weight:bold;">中保信实名支付宝支付</div>
<div class="a" style="left:508px;top:803.5px;font-size:17px;color:#333;font-weight:normal;">中保信实名支付宝支付</div>
<div class="a" style="left:69px;top:851px;width:841px;height:1px;background:#eeeff2"></div>
</div>
</body></html>
